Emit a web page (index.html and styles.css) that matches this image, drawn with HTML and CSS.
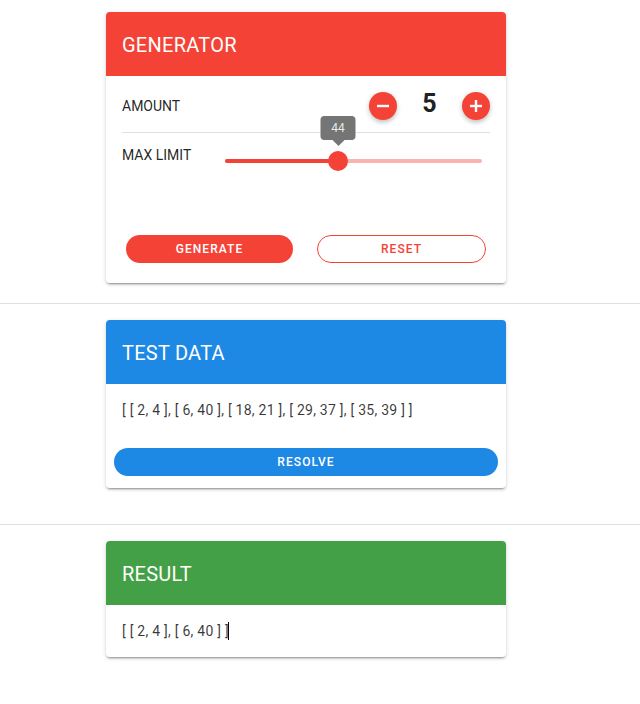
FILE: index.html
```html
<!DOCTYPE html>
<html>
<head>
<meta charset="utf-8">
<link rel="stylesheet" href="styles.css">
</head>
<body>
<section class="section first">
  <div class="card">
    <div class="card-title red">GENERATOR</div>
    <div class="gen-body">
      <div class="row amount-row">
        <span class="label">AMOUNT</span>
        <div class="stepper">
          <button class="fab red"><svg width="14" height="14" viewBox="0 0 14 14"><rect x="1" y="5.8" width="12" height="2.4" fill="#fff"/></svg></button>
          <span class="count">5</span>
          <button class="fab red"><svg width="14" height="14" viewBox="0 0 14 14"><rect x="1" y="5.8" width="12" height="2.4" fill="#fff"/><rect x="5.8" y="1" width="2.4" height="12" fill="#fff"/></svg></button>
        </div>
      </div>
      <div class="divider"></div>
      <div class="row limit-row">
        <span class="label">MAX LIMIT</span>
        <div class="slider">
          <div class="track"><div class="track-fill" style="width:44%"></div></div>
          <div class="thumb" style="left:44%">
            <div class="tip">44</div>
          </div>
        </div>
      </div>
    </div>
    <div class="gen-actions">
      <button class="btn filled red">GENERATE</button>
      <button class="btn outlined">RESET</button>
    </div>
  </div>
</section>
<hr class="sep">
<section class="section second">
  <div class="card">
    <div class="card-title blue">TEST DATA</div>
    <div class="card-text">[ [ 2, 4 ], [ 6, 40 ], [ 18, 21 ], [ 29, 37 ], [ 35, 39 ] ]</div>
    <div class="data-actions">
      <button class="btn filled blue wide">RESOLVE</button>
    </div>
  </div>
</section>
<hr class="sep">
<section class="section third">
  <div class="card">
    <div class="card-title green">RESULT</div>
    <div class="card-text">[ [ 2, 4 ], [ 6, 40 ] ]<span class="caret"></span></div>
  </div>
</section>
</body>
</html>
```
FILE: styles.css
```css
* { box-sizing: border-box; }
html, body { margin: 0; padding: 0; background: #fff; }
body { font-family: Roboto, "Liberation Sans", sans-serif; color: rgba(0,0,0,.87); }

.section { display: flex; justify-content: center; padding-right: 28px; }
.first { padding-top: 12px; padding-bottom: 20px; }
.second { padding-top: 16px; padding-bottom: 36px; }
.third { padding-top: 16px; padding-bottom: 20px; }

.sep { margin: 0; border: 0; border-top: 1px solid #e0e0e0; height: 0; }

.card {
  width: 400px;
  background: #fff;
  border-radius: 4px;
  overflow: hidden;
  box-shadow: 0 3px 1px -2px rgba(0,0,0,.2), 0 2px 2px 0 rgba(0,0,0,.14), 0 1px 5px 0 rgba(0,0,0,.12);
}

.card-title {
  height: 64px;
  display: flex;
  align-items: center;
  padding: 2px 16px 0;
  font-size: 20px;
  color: #fff;
  letter-spacing: .0125em;
}
.red { background: #f44336; }
.blue { background: #1e88e5; }
.green { background: #43a047; }

.gen-body { padding: 0 16px; }
.row { display: flex; }
.amount-row { height: 56px; padding-top: 3px; align-items: center; justify-content: space-between; }
.label { font-size: 14px; line-height: 20px; color: rgba(0,0,0,.87); }
.stepper { display: flex; align-items: center; }
.fab {
  width: 28px; height: 28px; border-radius: 50%; border: 0; padding: 0;
  display: flex; align-items: center; justify-content: center;
  box-shadow: 0 3px 5px -1px rgba(0,0,0,.2), 0 1px 6px 0 rgba(0,0,0,.12);
}
.count { width: 65px; text-align: center; font-size: 25px; font-weight: 700; color: #212121; margin-top: -4px; }

.divider { height: 1px; background: #e0e0e0; }

.limit-row { padding-top: 12px; height: 99px; align-items: flex-start; }
.limit-row .label { width: 103px; }
.slider { position: relative; flex: 1; height: 32px; margin-right: 8px; }
.track { position: absolute; left: 0; right: 0; top: 14px; height: 4px; border-radius: 2px; background: #f9b4ae; }
.track-fill { height: 100%; background: #f44336; border-radius: 2px; }
.thumb { position: absolute; top: 6px; width: 20px; height: 20px; margin-left: -10px; border-radius: 50%; background: #f44336; }
.tip {
  position: absolute; left: 50%; bottom: 31px; transform: translateX(-50%);
  width: 35px; height: 24px; border-radius: 4px; background: #757575;
  color: rgba(255,255,255,.85); font-size: 12px; line-height: 24px; text-align: center;
}
.tip::after {
  content: ""; position: absolute; left: 50%; top: 24px; margin-left: -6px;
  border-left: 6px solid transparent; border-right: 6px solid transparent; border-top: 6px solid #757575;
}

.gen-actions { display: flex; gap: 24px; padding: 3px 20px 20px; }
.btn {
  flex: 1; height: 28px; border-radius: 14px; font-family: Roboto, "Liberation Sans", sans-serif;
  font-size: 12px; font-weight: 500; letter-spacing: .0892em; padding: 0;
}
.filled { border: 0; color: #fff; }
.outlined { background: #fff; border: 1px solid #f44336; color: #f44336; }

.card-text { padding: 16px; font-size: 14px; line-height: 20px; letter-spacing: .25px; color: rgba(0,0,0,.78); }
.data-actions { display: flex; padding: 12px 8px 12px; }
.wide { flex: 1; }

.caret { display: inline-block; width: 1px; height: 18px; background: #000; vertical-align: -4px; margin-left: -1px; }
```
